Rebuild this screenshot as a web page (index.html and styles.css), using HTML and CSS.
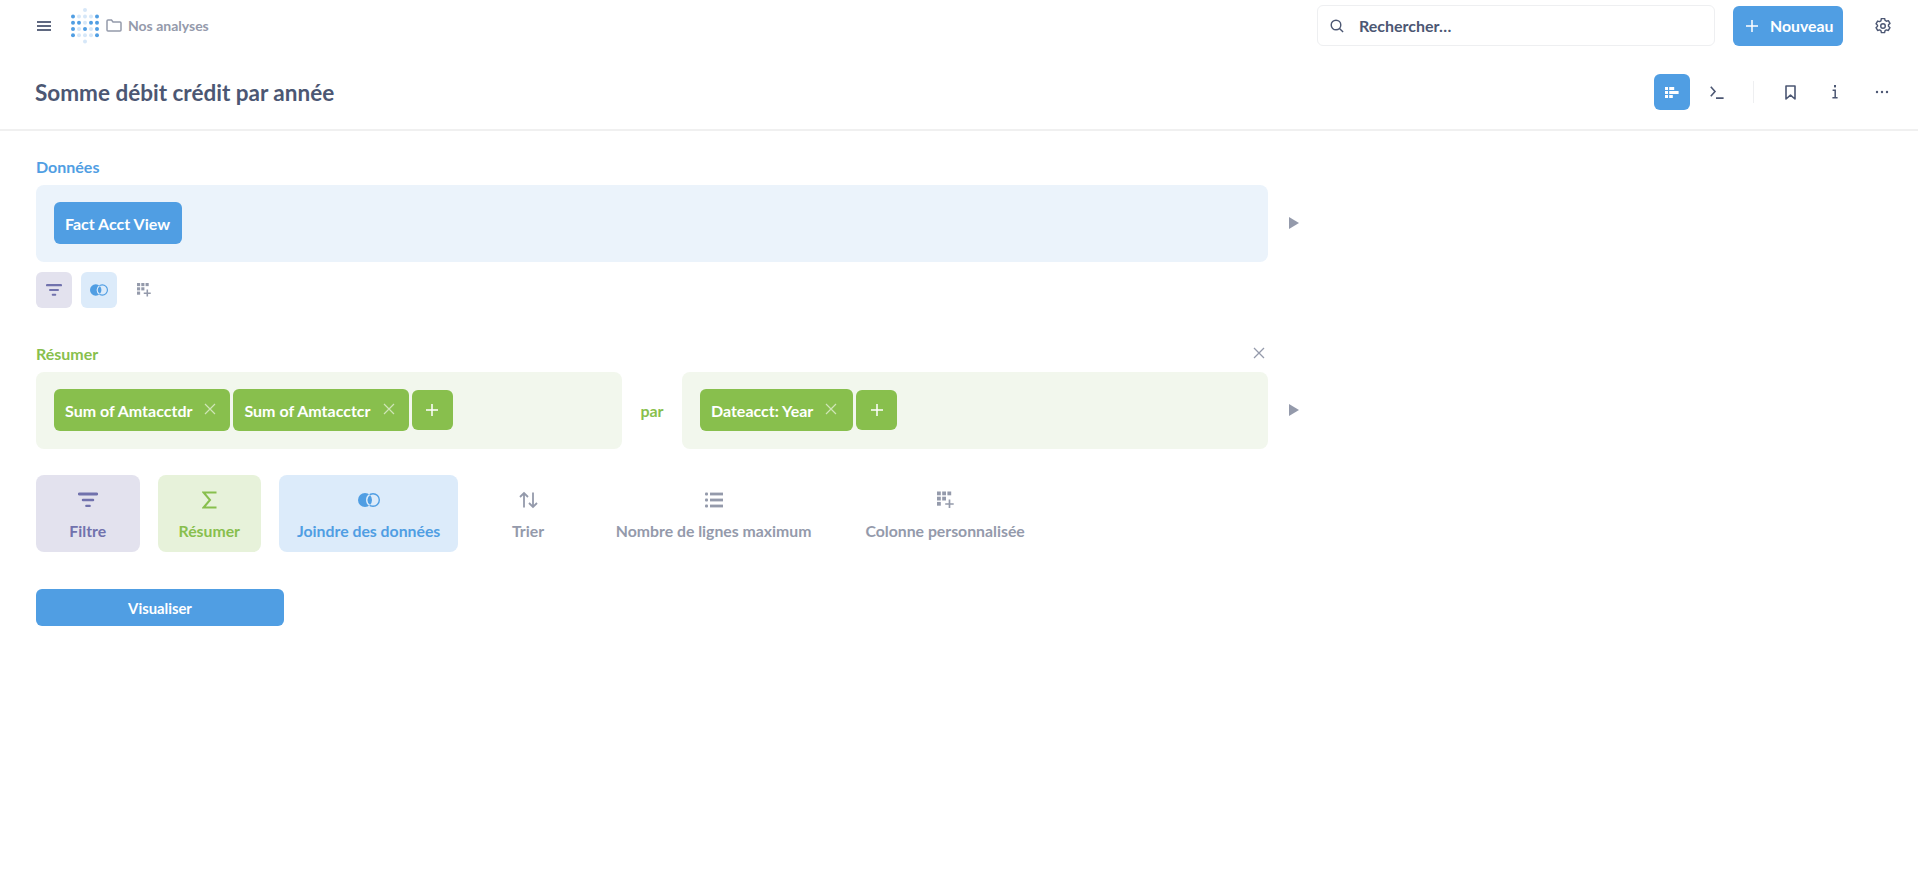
FILE: index.html
```html
<!DOCTYPE html>
<html lang="fr">
<head>
<meta charset="utf-8">
<title>Somme débit crédit par année</title>
<link rel="stylesheet" href="styles.css">
</head>
<body>
<nav class="topbar">
  <svg class="ic-menu" viewBox="0 0 14 10"><path d="M0 1h14M0 5h14M0 9h14" stroke="#5f6880" stroke-width="1.9" fill="none"/></svg>
  <svg class="logo" viewBox="0 0 28 36">
    <g fill="#509ee3"><circle cx="2" cy="8.4" r="2"/><circle cx="26" cy="8.4" r="2"/><circle cx="2" cy="14.7" r="2"/><circle cx="8" cy="14.7" r="2"/><circle cx="20" cy="14.7" r="2"/><circle cx="26" cy="14.7" r="2"/><circle cx="2" cy="21" r="2"/><circle cx="14" cy="21" r="2"/><circle cx="26" cy="21" r="2"/><circle cx="2" cy="27.3" r="2"/><circle cx="26" cy="27.3" r="2"/></g>
    <g fill="#d6e7f8"><circle cx="14" cy="2" r="2"/><circle cx="8" cy="8.4" r="2"/><circle cx="14" cy="8.4" r="2"/><circle cx="20" cy="8.4" r="2"/><circle cx="14" cy="14.7" r="2"/><circle cx="8" cy="21" r="2"/><circle cx="20" cy="21" r="2"/><circle cx="8" cy="27.3" r="2"/><circle cx="14" cy="27.3" r="2"/><circle cx="20" cy="27.3" r="2"/><circle cx="14" cy="33.6" r="2"/></g>
  </svg>
  <svg class="ic-folder" viewBox="0 0 16 13"><path d="M1 3V2a1 1 0 0 1 1-1h3.5l1.5 2h7a1 1 0 0 1 1 1v7a1 1 0 0 1-1 1H2a1 1 0 0 1-1-1z" fill="none" stroke="#949aab" stroke-width="1.5"/></svg>
  <span class="crumb">Nos analyses</span>
  <div class="nav-right">
    <div class="search">
      <svg class="ic-search" viewBox="0 0 14 14"><circle cx="6" cy="6" r="4.8" fill="none" stroke="#4c5773" stroke-width="1.4"/><path d="M9.5 9.5l3.6 3.6" stroke="#4c5773" stroke-width="1.4"/></svg>
      <span>Rechercher…</span>
    </div>
    <button class="new-btn"><svg viewBox="0 0 14 14"><path d="M7 1v12M1 7h12" stroke="#fff" stroke-width="1.5"/></svg>Nouveau</button>
    <svg class="ic-gear" viewBox="1 1 14 14"><path d="M6.6 1.4h2.8l.4 1.7 1.2.7 1.7-.5 1.4 2.4-1.3 1.2v1.4l1.3 1.2-1.4 2.4-1.7-.5-1.2.7-.4 1.7H6.6l-.4-1.7-1.2-.7-1.7.5-1.4-2.4 1.3-1.2V7.3L1.9 6.1l1.4-2.4 1.7.5 1.2-.7z" fill="none" stroke="#4c5773" stroke-width="1.25" stroke-linejoin="round"/><circle cx="8" cy="8" r="2" fill="none" stroke="#4c5773" stroke-width="1.25"/></svg>
  </div>
</nav>

<header class="titlebar">
  <h1>Somme débit crédit par année</h1>
  <div class="tools">
    <span class="tool-active"><svg viewBox="0 0 14 11"><g fill="#fff"><rect x="0" y="0" width="3" height="3"/><rect x="4.2" y="0" width="5" height="3"/><rect x="0" y="4" width="3" height="3"/><rect x="4.2" y="4" width="9.4" height="3"/><rect x="0" y="8" width="3" height="3"/><rect x="4.2" y="8" width="3.6" height="3"/></g></svg></span>
    <svg class="ic-term" viewBox="0 0 14 13"><path d="M.8 .8L5 5.5.8 10.2M6 12.1h7.6" fill="none" stroke="#4c5773" stroke-width="1.6"/></svg>
    <span class="tool-div"></span>
    <svg class="ic-book" viewBox="0 0 11 15"><path d="M1 1h9v13L5.5 10.2 1 14z" fill="none" stroke="#4c5773" stroke-width="1.6" stroke-linejoin="round"/></svg>
    <svg class="ic-info" viewBox="0 0 6 14"><rect x="2" y="0" width="2" height="2.4" fill="#4c5773"/><path d="M.6 5.2H3.2V12.6M.4 12.8h5.2" fill="none" stroke="#4c5773" stroke-width="1.5"/></svg>
    <svg class="ic-dots" viewBox="0 0 14 4"><circle cx="2" cy="2" r="1.2" fill="#4c5773"/><circle cx="7" cy="2" r="1.2" fill="#4c5773"/><circle cx="12" cy="2" r="1.2" fill="#4c5773"/></svg>
  </div>
</header>

<main class="content">
  <section class="step">
    <div class="step-head"><span class="step-label blue">Données</span></div>
    <div class="step-row">
      <div class="panel panel-blue fill"><span class="pill pill-blue">Fact Acct View</span></div>
      <svg class="tri" viewBox="0 0 10 12"><path d="M0 0l10 6-10 6z" fill="#949aab"/></svg>
    </div>
    <div class="mini-row">
      <span class="mini mini-filter"><svg class="i-filter-s" viewBox="0 0 20 15"><path d="M1.3 1.5h17.4" stroke="#7172ad" stroke-width="2.8" stroke-linecap="round"/><path d="M5 7.5h10" stroke="#7172ad" stroke-width="2.5" stroke-linecap="round"/><path d="M8.3 13.4h3.4" stroke="#7172ad" stroke-width="2.3" stroke-linecap="round"/></svg></span>
      <span class="mini mini-join"><svg class="i-join-s" viewBox="0 0 22 14"><circle cx="7" cy="7" r="7" fill="#509ee3"/><circle cx="15" cy="7" r="6.3" fill="none" stroke="#509ee3" stroke-width="1.4"/><path d="M11.6 1.7A6.3 6.3 0 0 0 11.6 12.3" fill="none" stroke="#dcebfa" stroke-width="1.4"/></svg></span>
      <span class="mini"><svg class="i-col-s" viewBox="0 0 17 17"><g fill="#949aab"><rect width="3.8" height="3.8"/><rect x="5.2" width="3.8" height="3.8"/><rect x="10.4" width="3.8" height="3.8"/><rect y="5.2" width="3.8" height="3.8"/><rect x="5.2" y="5.2" width="3.8" height="3.8"/><rect y="10.4" width="3.8" height="3.8"/></g><path d="M12.5 8v8.5M8.2 12.5h8.5" stroke="#949aab" stroke-width="1.9"/></svg></span>
    </div>
  </section>

  <section class="step step-sum">
    <div class="step-head"><span class="step-label green">Résumer</span>
      <svg class="ic-close" viewBox="0 0 12 12"><path d="M1 1l10 10M11 1L1 11" stroke="#949aab" stroke-width="1.3"/></svg>
    </div>
    <div class="step-row">
      <div class="sum-panels">
        <div class="panel panel-green fill">
          <span class="pill pill-green">Sum of Amtacctdr<svg class="pill-x" viewBox="0 0 12 12"><path d="M1 1l10 10M11 1L1 11" stroke="#fff" stroke-opacity=".6" stroke-width="1.2"/></svg></span>
          <span class="pill pill-green">Sum of Amtacctcr<svg class="pill-x" viewBox="0 0 12 12"><path d="M1 1l10 10M11 1L1 11" stroke="#fff" stroke-opacity=".6" stroke-width="1.2"/></svg></span>
          <span class="add"><svg viewBox="0 0 14 14"><path d="M7 1v12M1 7h12" stroke="#fff" stroke-width="1.5"/></svg></span>
        </div>
        <span class="par">par</span>
        <div class="panel panel-green fill">
          <span class="pill pill-green pill-date">Dateacct: Year<svg class="pill-x" viewBox="0 0 12 12"><path d="M1 1l10 10M11 1L1 11" stroke="#fff" stroke-opacity=".6" stroke-width="1.2"/></svg></span>
          <span class="add"><svg viewBox="0 0 14 14"><path d="M7 1v12M1 7h12" stroke="#fff" stroke-width="1.5"/></svg></span>
        </div>
      </div>
      <svg class="tri" viewBox="0 0 10 12"><path d="M0 0l10 6-10 6z" fill="#949aab"/></svg>
    </div>
  </section>

  <div class="actions">
    <div class="action act-filter"><svg class="i-filter" viewBox="0 0 20 15"><path d="M1.3 1.5h17.4" stroke="#7172ad" stroke-width="2.8" stroke-linecap="round"/><path d="M5 7.5h10" stroke="#7172ad" stroke-width="2.5" stroke-linecap="round"/><path d="M8.3 13.4h3.4" stroke="#7172ad" stroke-width="2.3" stroke-linecap="round"/></svg><span>Filtre</span></div>
    <div class="action act-sum"><svg class="i-sigma" viewBox="0 0 15 17"><path d="M14.5 1H1.6L8 8.5 1.6 16h12.9" fill="none" stroke="#88bf4d" stroke-width="2"/></svg><span>Résumer</span></div>
    <div class="action act-join"><svg class="i-join" viewBox="0 0 22 14"><circle cx="7" cy="7" r="7" fill="#509ee3"/><circle cx="15" cy="7" r="6.3" fill="none" stroke="#509ee3" stroke-width="1.4"/><path d="M11.6 1.7A6.3 6.3 0 0 0 11.6 12.3" fill="none" stroke="#dcebfa" stroke-width="1.4"/></svg><span>Joindre des données</span></div>
    <div class="action"><svg class="i-sort" viewBox="0 0 19 17"><path d="M5 16V1.5M1 5.5l4-4 4 4M14 1v14.5M10 11.5l4 4 4-4" fill="none" stroke="#949aab" stroke-width="1.8"/></svg><span>Trier</span></div>
    <div class="action"><svg class="i-list" viewBox="0 0 18 15"><g fill="#949aab"><rect y="0" width="3" height="3" rx="1"/><rect x="5" y=".1" width="13" height="2.8"/><rect y="6" width="3" height="3" rx="1"/><rect x="5" y="6.1" width="13" height="2.8"/><rect y="12" width="3" height="3" rx="1"/><rect x="5" y="12.1" width="13" height="2.8"/></g></svg><span>Nombre de lignes maximum</span></div>
    <div class="action"><svg class="i-col" viewBox="0 0 17 17"><g fill="#949aab"><rect width="3.8" height="3.8"/><rect x="5.2" width="3.8" height="3.8"/><rect x="10.4" width="3.8" height="3.8"/><rect y="5.2" width="3.8" height="3.8"/><rect x="5.2" y="5.2" width="3.8" height="3.8"/><rect y="10.4" width="3.8" height="3.8"/></g><path d="M12.5 8v8.5M8.2 12.5h8.5" stroke="#949aab" stroke-width="1.7"/></svg><span>Colonne personnalisée</span></div>
  </div>

  <button class="visualize">Visualiser</button>
</main>
</body>
</html>
```
FILE: styles.css
```css
* { box-sizing: border-box; }
html, body { margin: 0; height: 100%; background: #fff; }
body { font-family: Lato, "Open Sans", sans-serif; color: #4c5773; overflow: hidden; }
svg { display: block; flex: none; }

.topbar { display: flex; align-items: center; height: 51px; padding-left: 37px; }
.ic-menu { width: 14px; height: 10px; margin-right: 20px; }
.logo { width: 28px; height: 36px; margin-right: 7px; }
.ic-folder { width: 16px; height: 13px; margin-right: 6px; }
.crumb { font-size: 14px; font-weight: 700; color: #949aab; }
.nav-right { margin-left: auto; display: flex; align-items: center; }
.search { width: 398px; height: 41px; border: 1px solid #eeeff1; border-radius: 6px; display: flex; align-items: center; padding-left: 12px; font-size: 16px; font-weight: 700; }
.ic-search { width: 14px; height: 14px; margin-right: 15px; }
.new-btn { margin-left: 18px; width: 110px; height: 40px; background: #509ee3; border: 0; border-radius: 6px; color: #fff; font: 700 15.8px Lato, sans-serif; display: flex; align-items: center; padding: 0 0 0 12px; }
.new-btn svg { width: 14px; height: 14px; margin-right: 11px; }
.ic-gear { width: 16px; height: 16px; margin: 0 27px 0 32px; }

.titlebar { display: flex; align-items: center; justify-content: space-between; height: 80px; padding: 4px 29px 0 35px; border-bottom: 2px solid #f0f0f0; }
h1 { margin: 0; font-size: 22.5px; font-weight: 700; color: #4c5773; }
.tools { display: flex; align-items: center; }
.tool-active { width: 36px; height: 36px; background: #509ee3; border-radius: 6px; display: flex; align-items: center; justify-content: center; }
.tool-active svg { width: 14px; height: 11px; }
.ic-term { width: 14px; height: 13px; margin: 0 29px 0 20px; }
.tool-div { width: 1px; height: 22px; background: #eeeff1; }
.ic-book { width: 11px; height: 15px; margin: 0 36px 0 31px; }
.ic-info { width: 6px; height: 14px; margin-right: 37px; }
.ic-dots { width: 14px; height: 4px; }

.content { padding: 26px 0 0 36px; }
.step-head { width: 1232px; height: 28px; padding-bottom: 10px; display: flex; align-items: center; justify-content: space-between; }
.step-label { font-size: 16px; font-weight: 700; }
.blue { color: #509ee3; }
.green { color: #88bf4d; }
.ic-close { width: 12px; height: 12px; margin: 0 3px 0 0; }
.step-row { display: flex; align-items: center; }
.step-row .tri { margin: 0 0 2px 21px; width: 10px; height: 12px; }
.panel { height: 77px; border-radius: 8px; padding: 0 18px 1px; display: flex; align-items: center; gap: 3px; }
.fill { flex: 1 1 0; }
.step > .step-row > .panel { flex: none; width: 1232px; }
.panel-blue { background: #ebf3fb; }
.panel-green { background: #f2f7ed; }
.pill { height: 42px; border-radius: 6px; color: #fff; font-size: 16px; font-weight: 700; padding: 0 11px; display: inline-flex; align-items: center; }
.pill-blue { background: #509ee3; padding-right: 12px; }
.pill-green { background: #88bf4d; padding-right: 14px; }
.pill-date { padding-right: 16px; }
.pill-x { width: 12px; height: 12px; margin-left: 12px; margin-top: -2px; }
.add { width: 41px; height: 40px; border-radius: 6px; background: #88bf4d; display: flex; align-items: center; justify-content: center; }
.add svg { width: 14px; height: 14px; }
.sum-panels { width: 1232px; display: flex; align-items: center; }
.par { width: 60px; text-align: center; font-size: 16px; font-weight: 700; color: #88bf4d; }

.mini-row { display: flex; gap: 9px; margin-top: 10px; }
.mini { width: 36px; height: 36px; border-radius: 6px; display: flex; align-items: center; justify-content: center; }
.mini-filter { background: #e3e2ee; }
.mini-join { background: #dcebfa; }
.i-filter-s { width: 16px; height: 12px; }
.i-join-s { width: 18px; height: 12px; }
.i-col-s { width: 14px; height: 14px; }
.step-sum { margin-top: 36px; }

.actions { display: flex; gap: 18px; margin-top: 26px; }
.action { min-width: 103.5px; height: 77px; padding: 0 18px; border-radius: 8px; display: flex; flex-direction: column; align-items: center; font-size: 15.8px; font-weight: 700; color: #949aab; }
.action svg { height: 18px; margin-top: 16px; margin-bottom: 10px; }
.action span { line-height: 24px; white-space: nowrap; }
.act-filter { background: #e3e2ee; color: #7172ad; }
.act-sum { background: #e7f2da; color: #88bf4d; }
.act-join { background: #dcebfa; color: #509ee3; }
.i-filter { width: 20px; }
.i-sigma { width: 15px; }
.i-join { width: 22px; }
.i-sort { width: 19px; }
.i-list { width: 18px; }
.i-col { width: 17px; }

.visualize { display: block; margin-top: 37px; width: 248px; height: 37px; background: #509ee3; border: 0; border-radius: 6px; color: #fff; font: 700 14.8px Lato, sans-serif; }
```
